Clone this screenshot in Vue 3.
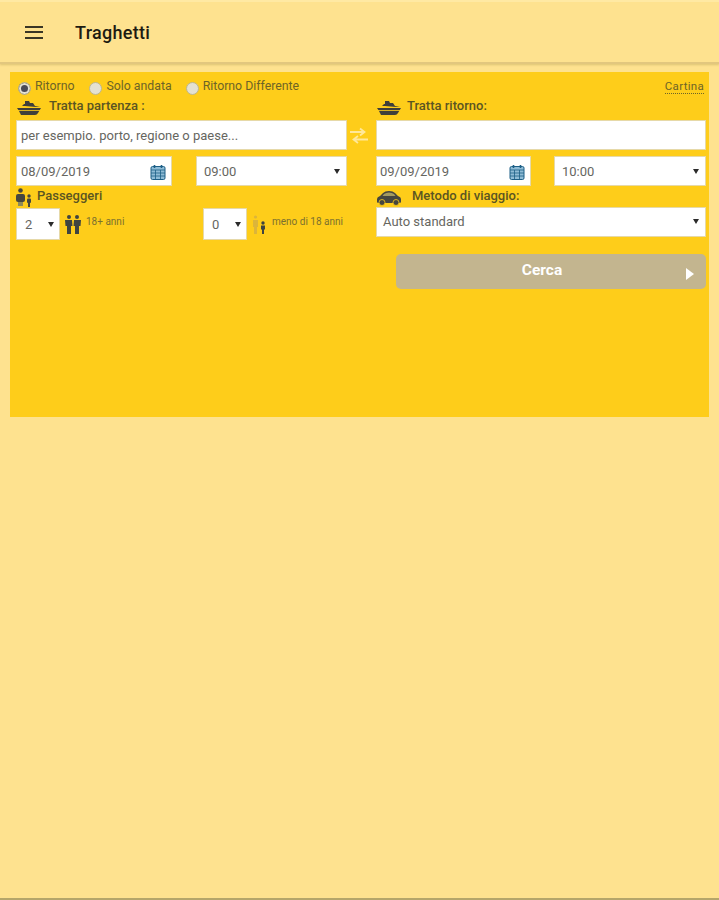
<template>
  <div class="page">
    <header class="topbar">
      <button class="menu" aria-label="menu">
        <span></span><span></span><span></span>
      </button>
      <h1>Traghetti</h1>
    </header>

    <main class="content">
      <form class="panel" @submit.prevent>
        <div class="trip-row">
          <label v-for="t in tripTypes" :key="t" class="radio" :class="{ on: trip === t }" @click="trip = t">
            <i></i>{{ t }}
          </label>
          <a class="map-link">Cartina</a>
        </div>

        <div class="columns">
          <section class="col">
            <div class="label ship-label">
              <svg class="ship" viewBox="0 0 26 16"><path d="M9 1h4l1 2h3l2 3 5 1H20L9 6H6l2-2h1zM1 8h24l-3 5q-1 2-3 2H5l-2-4z" fill="#3f3f3a"/><path d="M0 10.500h24" stroke="#ffcd1a" stroke-width=".8"/></svg>
              <span>Tratta partenza :</span>
            </div>
            <input class="field wide" placeholder="per esempio. porto, regione o paese..." />
            <div class="date-row">
              <div class="field date">
                <span>08/09/2019</span>
                <svg class="cal" viewBox="0 0 16 16"><rect x="1" y="2.500" width="14" height="13" rx="1.500" fill="#8fbcd6" stroke="#1d5f86"/><path d="M1 6h14M5.500 6v9M10.500 6v9M1 9h14M1 12h14" stroke="#1d5f86" stroke-width=".8"/><path d="M4.500 1v3M11.500 1v3" stroke="#1d5f86" stroke-width="1.600"/></svg>
              </div>
              <div class="field time"><span>09:00</span><b class="caret"></b></div>
            </div>
            <div class="label pax-label">
              <svg class="pax" viewBox="0 0 17 19"><g fill="#45463f"><circle cx="4.500" cy="2.500" r="2.300"/><rect x="0" y="6" width="9" height="8" rx="2"/><rect x="2" y="14" width="5" height="4" fill="#8f8a55"/><circle cx="13" cy="8" r="1.700"/><rect x="11" y="10.500" width="4" height="4.500" rx="1"/><rect x="12" y="15" width="2" height="4"/></g></svg>
              <span>Passeggeri</span>
            </div>
            <div class="pax-row">
              <div class="pax-group adult">
                <div class="field count"><span>2</span><b class="caret"></b></div>
                <svg class="pair" viewBox="0 0 16 19"><g fill="#3f4440"><circle cx="4" cy="2" r="2"/><circle cx="12" cy="2" r="2"/><path d="M0 5h7l.5 6H6v8H2v-8H.5z"/><path d="M9 5h7l-.5 6H14v8h-4v-8H8.500z"/></g></svg>
                <small>18+ anni</small>
              </div>
              <div class="pax-group minor">
                <div class="field count"><span>0</span><b class="caret"></b></div>
                <svg class="pair kid" viewBox="0 0 16 19"><g><path d="M1 5h5v7H5v7H2v-7H1z" fill="#dcb53a"/><circle cx="3.500" cy="2" r="1.600" fill="#dcb53a"/><circle cx="11" cy="8" r="1.700" fill="#3f4440"/><path d="M9 10.500h4v4h-1v4.500h-2v-4.500H9z" fill="#3f4440"/></g></svg>
                <small>meno di 18 anni</small>
              </div>
            </div>
          </section>

          <div class="swap">
            <svg viewBox="0 0 18 17"><path d="M0 5h13M10 1.500 14.500 5 10 8.500M18 12.500H5M8 9l-4.500 3.500L8 16" fill="none" stroke="#ffe89a" stroke-width="1.800"/></svg>
          </div>

          <section class="col">
            <div class="label ship-label back-label">
              <svg class="ship" viewBox="0 0 26 16"><path d="M9 1h4l1 2h3l2 3 5 1H20L9 6H6l2-2h1zM1 8h24l-3 5q-1 2-3 2H5l-2-4z" fill="#3f3f3a"/><path d="M0 10.500h24" stroke="#ffcd1a" stroke-width=".8"/></svg>
              <span>Tratta ritorno:</span>
            </div>
            <input class="field wide" />
            <div class="date-row back">
              <div class="field date">
                <span>09/09/2019</span>
                <svg class="cal" viewBox="0 0 16 16"><rect x="1" y="2.500" width="14" height="13" rx="1.500" fill="#8fbcd6" stroke="#1d5f86"/><path d="M1 6h14M5.500 6v9M10.500 6v9M1 9h14M1 12h14" stroke="#1d5f86" stroke-width=".8"/><path d="M4.500 1v3M11.500 1v3" stroke="#1d5f86" stroke-width="1.600"/></svg>
              </div>
              <div class="field time"><span>10:00</span><b class="caret"></b></div>
            </div>
            <div class="label car-label">
              <svg class="car" viewBox="0 0 26 15"><path d="M1 8q0-2 3-3l3-3q2-2 6-2t6 2l3 3q3 1 3 3v3q0 1-2 1H3q-2 0-2-1z" fill="#45463f"/><path d="M8 3q2-1.500 5-1.500T18 3l1.500 2h-13z" fill="#a39b62"/><circle cx="6" cy="11.500" r="3" fill="#45463f" stroke="#ffcd1a" stroke-width=".8"/><circle cx="20" cy="11.500" r="3" fill="#45463f" stroke="#ffcd1a" stroke-width=".8"/></svg>
              <span>Metodo di viaggio:</span>
            </div>
            <div class="field wide method"><span>Auto standard</span><b class="caret"></b></div>
            <button class="search" type="submit">
              <span>Cerca</span>
              <i class="play"></i>
            </button>
          </section>
        </div>
      </form>
    </main>
  </div>
</template>

<script setup>
import { ref } from 'vue'

const tripTypes = ['Ritorno', 'Solo andata', 'Ritorno Differente']
const trip = ref('Ritorno')
</script>

<style>
html, body {
  margin: 0;
  background: #fee28f;
}
</style>

<style scoped>
.page {
  box-sizing: border-box;
  height: 900px;
  background: #fee28f;
  border-bottom: 2px solid #b5a66a;
  font-family: Roboto, "Liberation Sans", sans-serif;
  color: #5b5522;
}

.topbar {
  box-sizing: border-box;
  height: 64px;
  display: flex;
  align-items: center;
  background: #fee28f;
  border-top: 2px solid #ffe9a3;
  border-bottom: 2px solid #e2c77e;
  box-shadow: 0 1px 2px rgba(120, 100, 40, .25);
}

.menu {
  width: 18px;
  height: 13px;
  margin-left: 25px;
  padding: 0;
  border: 0;
  background: none;
  display: flex;
  flex-direction: column;
  justify-content: space-between;
}

.menu span {
  display: block;
  height: 2px;
  background: #3a3625;
}

.topbar h1 {
  margin: 1px 0 0 32px;
  font-size: 18px;
  font-weight: 500;
  letter-spacing: .3px;
  color: #1d1b12;
}

.content {
  padding: 8px 10px 0;
}

.panel {
  box-sizing: border-box;
  height: 345px;
  padding: 8px 3px 0 6px;
  background: #fecd1a;
}

.trip-row {
  height: 18px;
  display: flex;
  align-items: flex-start;
  font-size: 12.300px;
  line-height: 13px;
  color: #6d6427;
}

.radio {
  display: flex;
  margin-right: 14px;
}

.radio i {
  box-sizing: border-box;
  width: 13px;
  height: 13px;
  margin: 2px 4px 0 0;
  border-radius: 50%;
  background: #e4e1d2;
  border: 1px solid #bdb68e;
}

.radio:first-child {
  margin: 0 15px 0 2px;
}

.radio.on i {
  background: #4a4a55;
  box-shadow: inset 0 0 0 2px #e4e1d2;
}

.map-link {
  margin-left: auto;
  margin-right: 2px;
  font-size: 11.500px;
  line-height: 12px;
  padding-bottom: 1px;
  letter-spacing: .3px;
  border-bottom: 1px dotted #6d6427;
}

.columns {
  display: grid;
  grid-template-columns: 331px 29px 330px;
}

.label {
  display: flex;
  font-size: 13px;
  font-weight: 500;
  line-height: 14px;
}

.label span {
  margin-top: 1px;
}

.ship-label {
  height: 22px;
  gap: 7px;
}

.back-label {
  gap: 5px;
}

.ship {
  width: 26px;
  height: 16px;
  margin-top: 2px;
}

.field {
  box-sizing: border-box;
  display: flex;
  align-items: center;
  height: 30px;
  padding: 0 4px;
  background: #fff;
  border: 1px solid #e6d9a8;
  font: 13px Roboto, "Liberation Sans", sans-serif;
  color: #66665f;
}

.wide {
  width: 100%;
  display: block;
  outline: none;
}

input.field::placeholder {
  color: #66665f;
  opacity: 1;
}

.date-row {
  display: flex;
  justify-content: space-between;
  margin-top: 6px;
}

.date {
  width: 156px;
  justify-content: space-between;
  padding-right: 5px;
}

.time {
  width: 151px;
  justify-content: space-between;
  padding: 0 6px 0 7px;
}

.back .date {
  width: 155px;
  padding-left: 3px;
}

.back .time {
  width: 152px;
}

.cal {
  width: 16px;
  height: 16px;
  margin-top: 2px;
}

.caret {
  width: 0;
  height: 0;
  border: 3px solid transparent;
  border-top: 5px solid #2b2b2b;
  border-bottom: 0;
}

.pax-label {
  height: 20px;
  margin-top: 2px;
  gap: 4px;
}

.pax {
  width: 17px;
  height: 19px;
}

.pax-row {
  display: flex;
}

.pax-group {
  display: flex;
}

.adult {
  width: 187px;
}

.count {
  width: 44px;
  height: 32px;
  justify-content: space-between;
  padding: 0 5px 0 8px;
}

.pair {
  width: 16px;
  height: 19px;
  margin: 7px 0 0 5px;
}

.pax-group small {
  margin: 8px 0 0 4px;
  font-size: 10px;
  line-height: 11px;
  color: #7b7030;
}

.adult small {
  margin-left: 5px;
}

.swap {
  display: flex;
  justify-content: flex-start;
  padding: 29px 0 0 3px;
}

.swap svg {
  width: 18px;
  height: 17px;
}

.car-label {
  height: 19px;
  margin-top: 2px;
  gap: 10px;
}

.car {
  width: 26px;
  height: 15px;
  margin-top: 3px;
}

.method {
  display: flex;
  justify-content: space-between;
  padding: 0 6px 2px 6px;
}

.search {
  position: relative;
  display: block;
  width: 310px;
  height: 35px;
  margin: 17px 0 0 20px;
  padding: 0 18px 3px 0;
  border: 0;
  border-radius: 5px;
  background: #c3b58f;
  color: #fff;
  font: 700 15.500px Roboto, "Liberation Sans", sans-serif;
}

.play {
  position: absolute;
  right: 12px;
  top: 14px;
  width: 0;
  height: 0;
  border: 6px solid transparent;
  border-left: 8px solid #fff;
  border-right: 0;
}
</style>
